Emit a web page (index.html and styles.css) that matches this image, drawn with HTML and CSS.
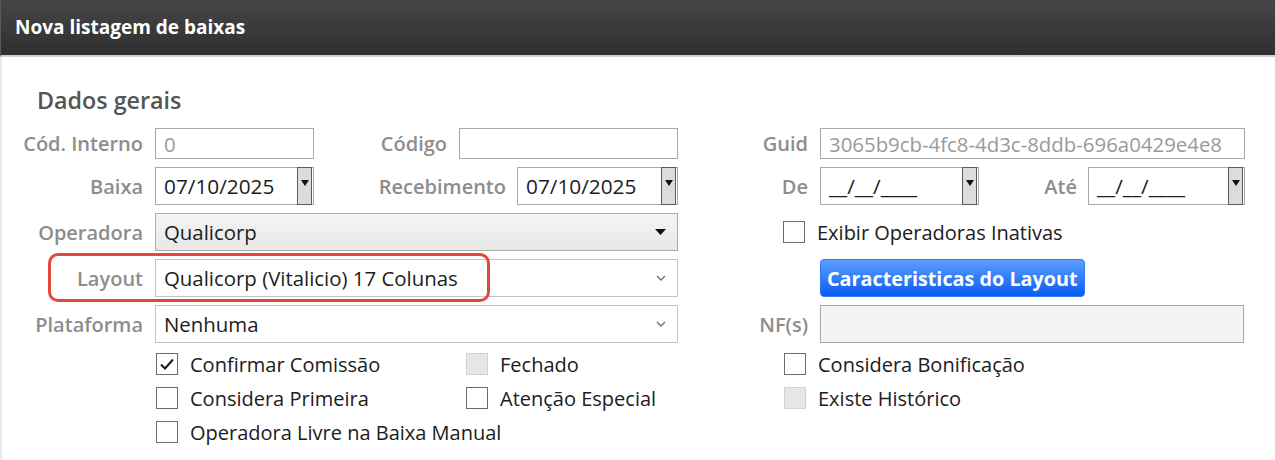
FILE: index.html
```html
<!DOCTYPE html>
<html lang="pt-BR">
<head>
<meta charset="utf-8">
<title>Nova listagem de baixas</title>
<link rel="stylesheet" href="styles.css">
</head>
<body>
<div class="window">
  <header class="titlebar">Nova listagem de baixas</header>
  <main class="content">
    <h2 class="section-title">Dados gerais</h2>
    <div class="form">
      <div class="row row-short">
        <div class="left">
          <span class="label lbl-main">Cód. Interno</span>
          <div class="field w-small muted">0</div>
          <span class="label lbl-codigo">Código</span>
          <div class="field w-codigo"></div>
        </div>
        <div class="right">
          <span class="label lbl-right">Guid</span>
          <div class="field w-guid muted">3065b9cb-4fc8-4d3c-8ddb-696a0429e4e8</div>
        </div>
      </div>

      <div class="row">
        <div class="left">
          <span class="label lbl-main">Baixa</span>
          <div class="date w-small">
            <span class="date-text">07/10/2025</span>
            <span class="date-btn"><svg width="8" height="6" viewBox="0 0 8 6"><polygon points="0,0 8,0 4,6" fill="#111"/></svg></span>
          </div>
          <span class="label lbl-receb">Recebimento</span>
          <div class="date w-receb">
            <span class="date-text">07/10/2025</span>
            <span class="date-btn"><svg width="8" height="6" viewBox="0 0 8 6"><polygon points="0,0 8,0 4,6" fill="#111"/></svg></span>
          </div>
        </div>
        <div class="right">
          <span class="label lbl-right">De</span>
          <div class="date w-de">
            <span class="date-text">__/__/____</span>
            <span class="date-btn"><svg width="8" height="6" viewBox="0 0 8 6"><polygon points="0,0 8,0 4,6" fill="#111"/></svg></span>
          </div>
          <span class="label lbl-ate">Até</span>
          <div class="date w-ate">
            <span class="date-text">__/__/____</span>
            <span class="date-btn"><svg width="8" height="6" viewBox="0 0 8 6"><polygon points="0,0 8,0 4,6" fill="#111"/></svg></span>
          </div>
        </div>
      </div>

      <div class="row">
        <div class="left">
          <span class="label lbl-main">Operadora</span>
          <div class="select w-full">
            <span>Qualicorp</span>
            <svg width="11" height="6" viewBox="0 0 11 6"><polygon points="0,0 11,0 5.5,6" fill="#111"/></svg>
          </div>
        </div>
        <div class="right right-check">
          <label class="check"><span class="cb"></span><span>Exibir Operadoras Inativas</span></label>
        </div>
      </div>

      <div class="row row-layout">
        <div class="left">
          <span class="label lbl-main">Layout</span>
          <div class="select select-light w-full">
            <span>Qualicorp (Vitalicio) 17 Colunas</span>
            <svg width="10" height="6" viewBox="0 0 10 6"><polyline points="1,1 5,5 9,1" fill="none" stroke="#707070" stroke-width="1.4"/></svg>
          </div>
        </div>
        <div class="right">
          <button class="btn" type="button">Caracteristicas do Layout</button>
        </div>
        <div class="highlight"></div>
      </div>

      <div class="row">
        <div class="left">
          <span class="label lbl-main">Plataforma</span>
          <div class="select select-light w-full">
            <span>Nenhuma</span>
            <svg width="10" height="6" viewBox="0 0 10 6"><polyline points="1,1 5,5 9,1" fill="none" stroke="#707070" stroke-width="1.4"/></svg>
          </div>
        </div>
        <div class="right">
          <span class="label lbl-right">NF(s)</span>
          <div class="field w-nf disabled-bg"></div>
        </div>
      </div>

      <div class="checks">
        <div class="check-row">
          <div class="check-left">
            <label class="check check-col"><span class="cb"><svg width="16" height="14" viewBox="0 0 16 14"><polyline points="2,7.5 6,11.5 14,2.5" fill="none" stroke="#1a1a1a" stroke-width="2"/></svg></span><span>Confirmar Comissão</span></label>
            <label class="check"><span class="cb cb-disabled"></span><span>Fechado</span></label>
          </div>
          <div class="check-right">
            <label class="check"><span class="cb"></span><span>Considera Bonificação</span></label>
          </div>
        </div>
        <div class="check-row">
          <div class="check-left">
            <label class="check check-col"><span class="cb"></span><span>Considera Primeira</span></label>
            <label class="check"><span class="cb"></span><span>Atenção Especial</span></label>
          </div>
          <div class="check-right">
            <label class="check"><span class="cb cb-disabled"></span><span>Existe Histórico</span></label>
          </div>
        </div>
        <div class="check-row">
          <div class="check-left">
            <label class="check check-col"><span class="cb"></span><span>Operadora Livre na Baixa Manual</span></label>
          </div>
        </div>
      </div>
    </div>
  </main>
</div>
</body>
</html>
```

FILE: styles.css
```css
* { box-sizing: border-box; }

html, body {
  margin: 0;
  padding: 0;
  background: #ffffff;
}

body {
  width: 1275px;
  height: 460px;
  overflow: hidden;
  font-family: "Open Sans", "Noto Sans", sans-serif;
  font-size: 20px;
  color: #1c1c1c;
}

.titlebar {
  height: 57px;
  padding-left: 14px;
  display: flex;
  align-items: center;
  padding-bottom: 2px;
  background: linear-gradient(#464646, #2f2f2f);
  border-bottom: 2px solid #cfcfcf;
  border-left: 1px solid #5a5a5a;
  color: #ffffff;
  font-weight: 700;
  font-size: 19px;
}

.content {
  height: 403px;
  border-left: 2px solid #e4ecf5;
}

.section-title {
  margin: 0;
  padding: 28px 0 0 35px;
  font-size: 23.3px;
  line-height: 31px;
  font-weight: 600;
  color: #555555;
}

.form {
  margin-top: 12px;
  display: flex;
  flex-direction: column;
  gap: 8px;
}

.row {
  position: relative;
  display: flex;
  height: 38px;
}

.row-short { height: 31px; }

.left {
  width: 676px;
  display: flex;
  align-items: stretch;
}

.right {
  flex: 1;
  display: flex;
  align-items: stretch;
}

.label {
  display: flex;
  align-items: center;
  justify-content: flex-end;
  font-weight: 600;
  color: #8d8d8d;
  white-space: nowrap;
}

.lbl-main { width: 141px; margin-right: 12px; }
.lbl-codigo { width: 133px; margin-right: 12px; }
.lbl-receb { width: 192px; margin-right: 11px; }
.lbl-right { width: 130px; margin-right: 12px; }
.lbl-ate { width: 98px; margin-right: 11px; }

.field {
  display: flex;
  align-items: center;
  padding-left: 8px;
  border: 1px solid #a9a9a9;
  background: #ffffff;
  white-space: nowrap;
  overflow: hidden;
  font-size: 20.4px;
}

.muted { color: #9a9a9a; }
.disabled-bg { background: #f4f4f4; border-color: #a9a9a9; }

.w-small { width: 159px; }
.w-codigo { width: 219px; }
.w-receb { width: 161px; }
.w-guid { width: 425px; }
.w-de { width: 159px; }
.w-ate { width: 157px; }
.w-full { width: 523px; }
.w-nf { width: 424px; }

.date {
  display: flex;
  align-items: stretch;
  border: 1px solid #a9a9a9;
  background: #ffffff;
}

.date-text {
  flex: 1;
  display: flex;
  align-items: center;
  padding-left: 8px;
  white-space: nowrap;
  font-size: 20.8px;
}

.date-btn {
  width: 15px;
  margin: -1px 1px -1px 0;
  display: flex;
  align-items: center;
  justify-content: center;
  padding-bottom: 6px;
  background: #dcdcdc;
  border: 1px solid #5b5b5b;
}

.select {
  display: flex;
  align-items: center;
  justify-content: space-between;
  padding: 0 11px 0 8px;
  border: 1px solid #acacac;
  background: linear-gradient(#f4f4f4, #e8e8e8);
  font-size: 20.4px;
}

.select-light {
  background: #ffffff;
  border-color: #c4c4c4;
}

.right-check { padding-left: 105px; align-items: center; }

.check {
  display: flex;
  align-items: center;
  white-space: nowrap;
  color: #202020;
}

.cb {
  width: 22px;
  height: 22px;
  margin-right: 12px;
  border: 1px solid #6c6c6c;
  background: #ffffff;
  display: flex;
  align-items: center;
  justify-content: center;
  flex: none;
}

.cb-disabled {
  background: #e6e6e6;
  border-color: #d2d2d2;
}

.btn {
  margin-left: 142px;
  height: 38px;
  padding: 0 6px;
  border: 1px solid #2f7af4;
  border-radius: 4px;
  background: linear-gradient(#5c9eff, #0a5cf1);
  color: #ffffff;
  font-family: inherit;
  font-size: 19.8px;
  font-weight: 700;
}

.highlight {
  position: absolute;
  left: 46px;
  top: -6px;
  width: 442px;
  height: 49px;
  border: 3px solid #e2483b;
  border-radius: 10px;
  pointer-events: none;
}

.checks {
  margin-top: -4px;
  display: flex;
  flex-direction: column;
}

.check-row {
  display: flex;
  height: 34px;
}

.check-left {
  width: 676px;
  padding-left: 154px;
  display: flex;
  align-items: center;
}

.check-col { width: 310px; }

.check-right {
  flex: 1;
  padding-left: 106px;
  display: flex;
  align-items: center;
}
```
